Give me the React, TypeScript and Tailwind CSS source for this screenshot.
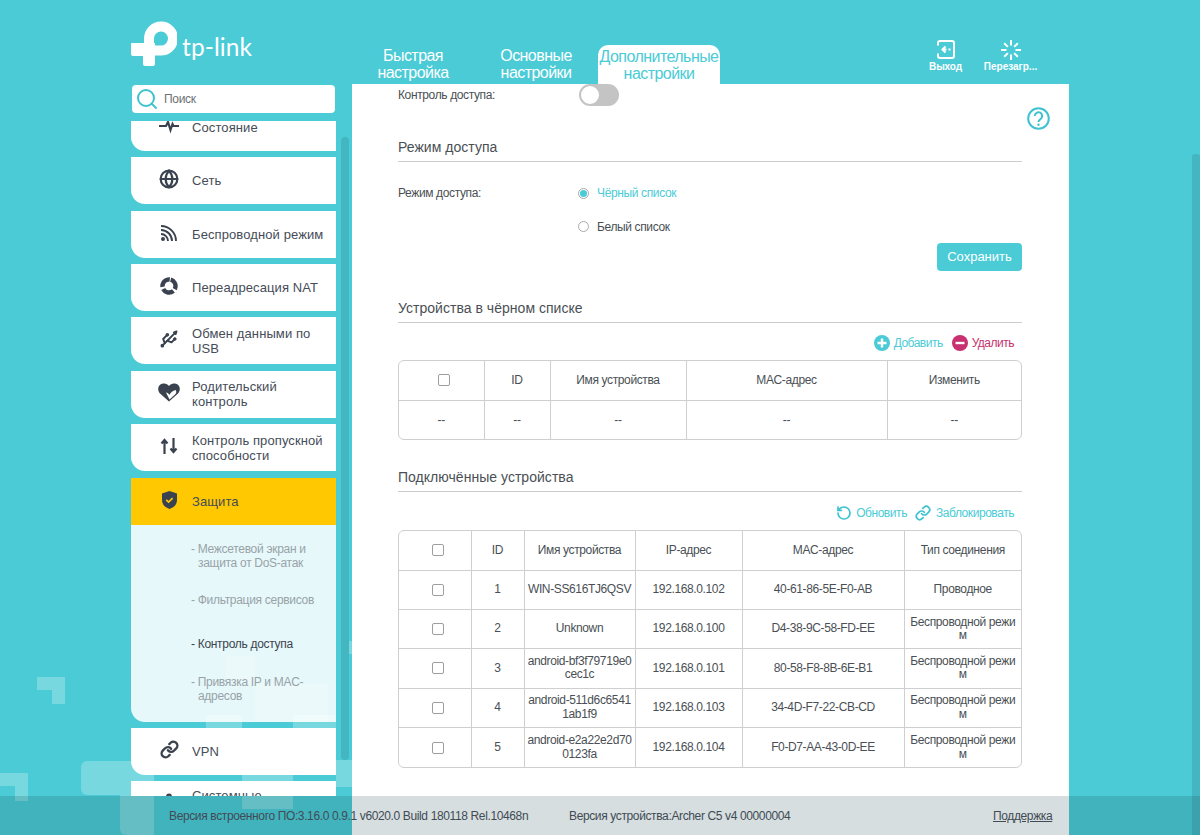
import { Globe, Usb, Link, RotateCcw, Settings, Search } from "lucide-react";
import type { ReactNode } from "react";

const font = { fontFamily: '"Liberation Sans", Arial, sans-serif' };

function LogoMark() {
  return (
    <svg width="46" height="45" viewBox="0 0 46 45" className="shrink-0">
      <path d="M18 24 V17.500 A12 12 0 1 1 29.500 29.500 H24" fill="none" stroke="#fff" strokeWidth="10" />
      <path d="M1 22 H24 V43 Q24 45 22 45 H14 Q12 45 12 43 V35 H2 Q0 35 0 33 V23 Q0 22 1 22 Z" fill="#fff" />
    </svg>
  );
}

const ic = "#39424e";

function StatusIcon() {
  return (
    <svg width="20" height="20" viewBox="0 0 20 20" fill="none" stroke={ic} strokeWidth="2.200">
      <path d="M0 10h7l2-4 2.500 8 2-6 1 2H20" />
    </svg>
  );
}
function RssIcon() {
  return (
    <svg width="18" height="18" viewBox="0 0 18 18" fill="none" stroke={ic} strokeWidth="1.900">
      <circle cx="3" cy="15" r="2" fill={ic} stroke="none" />
      <path d="M1 10a7 7 0 0 1 7 7M1 6a11 11 0 0 1 11 11M1 2a15 15 0 0 1 15 15" />
    </svg>
  );
}
function NatIcon() {
  return (
    <svg width="18" height="18" viewBox="0 0 18 18" fill="none" stroke={ic} strokeWidth="4.400">
      <circle cx="9" cy="9" r="6.500" strokeDasharray="11.600 2" transform="rotate(-75 9 9)" />
    </svg>
  );
}
function HeartIcon() {
  return (
    <svg width="22" height="19" viewBox="0 0 22 19">
      <path d="M11 18.500 2 10.500C-1 7-.2 2 4 .8 7 0 9.500 1 11 3c1.500-2 4-3 7-2.200 4.200 1.200 5 6.200 2 9.700z" fill={ic} />
      <path d="M8 9.500c1.500.2 2.500 1 3.500 2.300 1-2.300 3.500-4.300 6-4.800 1.200 1.300 1 3-.2 4.200L11.500 16.500" fill="#fff" />
    </svg>
  );
}
function ArrowsIcon() {
  return (
    <svg width="18" height="18" viewBox="0 0 18 18" fill="none" stroke={ic} strokeWidth="2.200">
      <path d="M4.500 17V4M1.500 6.500l3-3.500 3 3.500M13.500 1v13M10.500 11.500l3 3.500 3-3.500" />
    </svg>
  );
}
function ShieldIcon() {
  return (
    <svg width="15" height="18" viewBox="0 0 15 18">
      <path d="M7.500 0 15 2.500V9c0 4.500-3.200 7.500-7.500 9C3.200 16.500 0 13.500 0 9V2.500z" fill={ic} />
      <path d="M4.200 8.800l2.400 2.300 4-4" fill="none" stroke="#ffc800" strokeWidth="1.700" />
    </svg>
  );
}
function LogoutIcon() {
  return (
    <svg width="18" height="19" viewBox="0 0 18 19" fill="none" stroke="#fff" strokeWidth="2">
      <path d="M1 5.500V3a2 2 0 0 1 2-2h12a2 2 0 0 1 2 2v13a2 2 0 0 1-2 2H3a2 2 0 0 1-2-2v-2.500" />
      <path d="M13.500 9.500H11.500M9.500 9.500H6M8.500 6.500l-3 3 3 3" />
    </svg>
  );
}
function RebootIcon() {
  return (
    <svg width="20" height="20" viewBox="0 0 20 20" fill="none" stroke="#fff" strokeWidth="2">
      <path d="M10 0v5.500M10 14.500V20M0 10h5.500M14.500 10H20M3.200 3.200l3.700 3.700M13.100 13.100l3.700 3.700M3.200 16.800l3.700-3.700M13.100 6.900l3.700-3.700" />
    </svg>
  );
}
function HelpIcon() {
  return (
    <svg width="23" height="23" viewBox="0 0 23 23" fill="none" stroke="#3fc3d0" strokeWidth="2">
      <circle cx="11.500" cy="11.500" r="10.300" />
      <path d="M7.800 9a3.700 3.700 0 1 1 5.700 3.100c-1.300.8-2 1.300-2 2.900" />
      <circle cx="11.500" cy="17.800" r="1.200" fill="#3fc3d0" stroke="none" />
    </svg>
  );
}
function CircleSign({ color, plus }: { color: string; plus?: boolean }) {
  return (
    <svg width="16" height="16" viewBox="0 0 16 16" className="shrink-0">
      <circle cx="8" cy="8" r="8" fill={color} />
      <path d={plus ? "M3.500 8h9M8 3.500v9" : "M3.500 8h9"} stroke="#fff" strokeWidth="2.400" />
    </svg>
  );
}

function NavItem({ icon, label, active, square }: { icon: ReactNode; label: ReactNode; active?: boolean; square?: boolean }) {
  return (
    <div
      className={`flex h-[47px] shrink-0 items-center ${active ? "bg-[#ffc800]" : "bg-white"} ${square ? "" : "rounded-bl-[14px]"}`}
    >
      <div className="flex w-[61px] shrink-0 justify-center pl-[15px] pb-[3px]">{icon}</div>
      <div className="text-[13px] leading-[15px] tracking-[0.1px] text-[#454c57]">{label}</div>
    </div>
  );
}

function Heading({ children, className }: { children: ReactNode; className: string }) {
  return (
    <div className={`h-[27px] border-b border-[#cccccc] text-[14px] leading-[24px] tracking-[0.03px] text-[#4a4f55] ${className}`}>{children}</div>
  );
}

function Check() {
  return <span className="mx-auto block h-[12px] w-[12px] translate-x-[3px] rounded-[2px] border border-[#9e9e9e] bg-white" />;
}

const devices = [
  ["1", "WIN-SS616TJ6QSV", "192.168.0.102", "40-61-86-5E-F0-AB", "Проводное"],
  ["2", "Unknown", "192.168.0.100", "D4-38-9C-58-FD-EE", "Беспроводной режим"],
  ["3", "android-bf3f79719e0cec1c", "192.168.0.101", "80-58-F8-8B-6E-B1", "Беспроводной режим"],
  ["4", "android-511d6c65411ab1f9", "192.168.0.103", "34-4D-F7-22-CB-CD", "Беспроводной режим"],
  ["5", "android-e2a22e2d700123fa", "192.168.0.104", "F0-D7-AA-43-0D-EE", "Беспроводной режим"],
];

const cell = "border-r border-b border-[#cfcfcf] px-[2px] text-center align-middle break-all";

export default function App() {
  return (
    <div style={font} className="relative h-[835px] w-[1200px] overflow-hidden bg-[#4acbd6]">
      {/* background decoration */}
      <div className="absolute left-[37px] top-[677px] h-[13px] w-[28px] bg-white/25" />
      <div className="absolute left-[52px] top-[690px] h-[14px] w-[13px] bg-white/25" />
      <div className="absolute left-0 top-[773px] h-[13px] w-[28px] bg-white/25" />
      <div className="absolute left-[15px] top-[786px] h-[15px] w-[13px] bg-white/25" />
      <div className="absolute left-[81px] top-[761px] h-[34px] w-[73px] rounded-l-[6px] bg-white/25" />
      <div className="absolute left-[120px] top-[795px] h-[40px] w-[34px] rounded-bl-[6px] bg-white/25" />
      <div className="absolute left-[206px] top-[715px] h-[20px] w-[36px] bg-white/25" />
      <div className="absolute left-[293px] top-[715px] h-[20px] w-[43px] bg-white/25" />
      <div className="absolute left-[242px] top-[770px] h-[39px] w-[51px] bg-white/25" />
      <div className="absolute left-[336px] top-[760px] h-[27px] w-[16px] bg-white/25" />
      <div className="absolute left-[342px] top-[641px] h-[13px] w-[10px] bg-white/25" />
      <div className="absolute left-[226px] top-[656px] h-[28px] w-[29px] bg-white/15" />
      <div className="absolute left-[255px] top-[684px] h-[38px] w-[73px] bg-white/15" />

      <div className="relative flex pl-[131px]">
        {/* left column */}
        <div className="flex h-[796px] w-[205px] flex-col">
          <div className="flex h-[85px] shrink-0 items-start pt-[21px]">
            <LogoMark />
            <span
              style={{ fontFamily: 'Lato, "Liberation Sans", sans-serif' }}
              className="ml-[5px] mt-[11px] text-[24.5px] leading-[30px] tracking-[0.1px] text-white"
            >
              tp-link
            </span>
          </div>
          <div className="ml-[1px] mr-[1px] flex h-[28px] shrink-0 items-center rounded-[4px] bg-white">
            <Search size={24} strokeWidth={2} color="#3fc3d0" className="ml-[3px]" />
            <span className="ml-[5px] text-[12px] tracking-[-0.3px] text-[#6c7075]">Поиск</span>
          </div>
          <div className="mt-[8px] flex min-h-0 flex-1 flex-col gap-[6.4px] overflow-hidden">
            <div className="-mt-[17.2px] shrink-0">
              <NavItem icon={<StatusIcon />} label="Состояние" />
            </div>
            <NavItem icon={<Globe size={20} strokeWidth={2.6} color={ic} />} label="Сеть" />
            <NavItem icon={<RssIcon />} label="Беспроводной режим" />
            <NavItem icon={<NatIcon />} label="Переадресация NAT" />
            <NavItem icon={<Usb size={20} strokeWidth={2.4} color={ic} />} label={<>Обмен данными по<br />USB</>} />
            <NavItem icon={<HeartIcon />} label={<>Родительский<br />контроль</>} />
            <NavItem icon={<ArrowsIcon />} label={<>Контроль пропускной<br />способности</>} />
            <div className="shrink-0">
              <NavItem icon={<ShieldIcon />} label="Защита" active square />
              <div className="h-[197px] rounded-bl-[14px] bg-white/87 pl-[60px] text-[12px] leading-[14px] tracking-[-0.3px] text-[#97a3a8]">
                <div className="flex h-[50px] items-end pb-[5px]">
                  <div className="pl-[7px] -indent-[7px]">- Межсетевой экран и<br />защита от DoS-атак</div>
                </div>
                <div className="mt-[18px]">- Фильтрация сервисов</div>
                <div className="mt-[30px] text-[#3c4450]">- Контроль доступа</div>
                <div className="mt-[24px] pl-[7px] -indent-[7px]">- Привязка IP и MAC-<br />адресов</div>
              </div>
            </div>
            <NavItem icon={<Link size={19} strokeWidth={3} color={ic} />} label="VPN" />
            <NavItem
              icon={<Settings size={20} strokeWidth={2.6} color={ic} />}
              label={<span className="block -translate-y-[2px]">Системные<br />параметры</span>}
            />
          </div>
        </div>

        {/* sidebar scrollbar */}
        <div className="ml-[5px] mt-[137px] h-[623px] w-[8px] shrink-0 rounded-full bg-[#43b6c2]" />

        {/* right column */}
        <div className="ml-[3px] flex h-[835px] w-[717px] flex-col">
          <div className="flex h-[84px] shrink-0 items-end text-[16px] leading-[17px] tracking-[-0.55px]">
            <div className="w-[122px] pb-[3px] text-center text-white">Быстрая<br />настройка</div>
            <div className="w-[124px] pb-[3px] text-center text-white">Основные<br />настройки</div>
            <div className="h-[39px] w-[122px] rounded-t-[10px] bg-white pt-[3px] text-center text-[#4acbd6]">Дополнительные<br />настройки</div>
            <div className="ml-[193px] flex w-[65px] flex-col items-center pb-[11px] font-bold tracking-[-0.1px]">
              <LogoutIcon />
              <span className="mt-[2px] text-[10px] leading-[12px] text-white">Выход</span>
            </div>
            <div className="flex w-[65px] flex-col items-center pb-[11px] font-bold tracking-normal">
              <RebootIcon />
              <span className="mt-[1px] text-[10px] leading-[12px] text-white">Перезагр...</span>
            </div>
          </div>

          <div className="relative min-h-0 flex-1 overflow-hidden bg-white pl-[46px] pr-[47px] text-[12px] tracking-[-0.37px] text-[#4a4f55]">
            <div className="absolute left-[675px] top-[23px]"><HelpIcon /></div>

            <div className="flex h-[22px] items-center">
              <span className="w-[181px]">Контроль доступа:</span>
              <span className="relative block h-[22px] w-[40px] rounded-full bg-[#c4c4c4]">
                <span className="absolute left-[2px] top-[2px] h-[18px] w-[18px] rounded-full bg-white" />
              </span>
            </div>

            <Heading className="mt-[29px]">Режим доступа</Heading>

            <div className="mt-[14px] flex h-[34px] items-center">
              <span className="w-[180px]">Режим доступа:</span>
              <span className="flex h-[11px] w-[11px] items-center justify-center rounded-full border border-[#aaaaaa]">
                <span className="h-[7px] w-[7px] rounded-full bg-[#4acbd6]" />
              </span>
              <span className="ml-[8px] text-[#4acbd6]">Чёрный список</span>
            </div>
            <div className="flex h-[33px] items-center pl-[180px]">
              <span className="h-[11px] w-[11px] rounded-full border border-[#aaaaaa]" />
              <span className="ml-[8px]">Белый список</span>
            </div>
            <div className="flex justify-end">
              <button className="h-[28px] w-[85px] rounded-[4px] bg-[#4acbd6] text-[13px] tracking-normal text-white">Сохранить</button>
            </div>

            <Heading className="mt-[25px]">Устройства в чёрном списке</Heading>
            <div className="mt-[10px] flex h-[20px] items-center justify-end pr-[8px] tracking-[-0.5px]">
              <CircleSign color="#4acbd6" plus />
              <span className="ml-[4px] text-[#4acbd6]">Добавить</span>
              <span className="ml-[9px]"><CircleSign color="#c8306f" /></span>
              <span className="ml-[4px] text-[#c8306f]">Удалить</span>
            </div>
            <div className="mt-[7px] overflow-hidden rounded-[6px] border border-[#cfcfcf]">
              <table className="w-[623px] table-fixed border-collapse">
                <colgroup>
                  <col className="w-[85px]" />
                  <col className="w-[66px]" />
                  <col className="w-[136px]" />
                  <col className="w-[201px]" />
                  <col />
                </colgroup>
                <tbody>
                  <tr className="h-[39px]">
                    <td className={cell}><Check /></td>
                    <td className={cell}>ID</td>
                    <td className={cell}>Имя устройства</td>
                    <td className={cell}>MAC-адрес</td>
                    <td className={cell}>Изменить</td>
                  </tr>
                  <tr className="h-[39px]">
                    {[0, 1, 2, 3, 4].map((i) => (
                      <td key={i} className={`${cell} border-b-0`}>--</td>
                    ))}
                  </tr>
                </tbody>
              </table>
            </div>

            <Heading className="mt-[25px]">Подключённые устройства</Heading>
            <div className="mt-[11px] flex h-[20px] items-center justify-end pr-[8px] tracking-[-0.44px] text-[#4acbd6]">
              <RotateCcw size={16} strokeWidth={2.6} color="#3fc3d0" />
              <span className="ml-[4px]">Обновить</span>
              <Link size={16} strokeWidth={2.6} color="#3fc3d0" className="ml-[8px]" />
              <span className="ml-[5px]">Заблокировать</span>
            </div>
            <div className="mt-[7px] overflow-hidden rounded-[6px] border border-[#cfcfcf] leading-[13.4px]">
              <table className="w-[623px] table-fixed border-collapse">
                <colgroup>
                  <col className="w-[72px]" />
                  <col className="w-[53px]" />
                  <col className="w-[111px]" />
                  <col className="w-[107px]" />
                  <col className="w-[162px]" />
                  <col />
                </colgroup>
                <tbody>
                  <tr className="h-[39px]">
                    <td className={cell}><Check /></td>
                    <td className={cell}>ID</td>
                    <td className={cell}>Имя устройства</td>
                    <td className={cell}>IP-адрес</td>
                    <td className={cell}>MAC-адрес</td>
                    <td className={cell}>Тип соединения</td>
                  </tr>
                  {devices.map((d, r) => (
                    <tr key={d[0]} className="h-[39.4px]">
                      <td className={`${cell} ${r === 4 ? "border-b-0" : ""}`}><Check /></td>
                      {d.map((v, c) => (
                        <td key={c} className={`${cell} ${r === 4 ? "border-b-0" : ""}`}>{v}</td>
                      ))}
                    </tr>
                  ))}
                </tbody>
              </table>
            </div>
          </div>
        </div>
      </div>

      {/* page scrollbar */}
      <div className="absolute right-0 top-[154px] h-[681px] w-[8px] rounded-t-[3px] bg-[#43b6c2]" />

      {/* footer overlay */}
      <div className="absolute bottom-0 left-0 flex h-[39px] w-full items-center bg-[rgba(30,70,80,0.18)] pl-[169px] text-[12px] tracking-[-0.37px] text-[#414b55]">
        <span className="w-[400px]">Версия встроенного ПО:3.16.0 0.9.1 v6020.0 Build 180118 Rel.10468n</span>
        <span className="w-[424px]">Версия устройства:Archer C5 v4 00000004</span>
        <span className="underline">Поддержка</span>
      </div>
    </div>
  );
}
